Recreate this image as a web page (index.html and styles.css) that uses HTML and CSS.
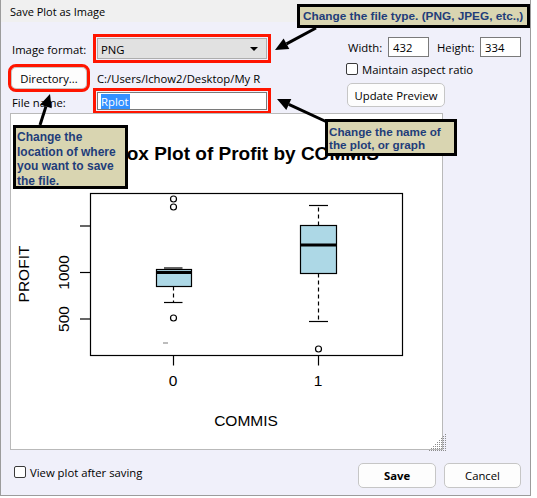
FILE: index.html
```html
<!DOCTYPE html>
<html>
<head>
<meta charset="utf-8">
<title>Save Plot as Image</title>
<link rel="stylesheet" href="styles.css">
</head>
<body>
<div class="window">
  <div class="titlebar">Save Plot as Image</div>
  <div class="content">
    <div class="controls">
      <div class="left">
        <div class="row row-format">
          <span class="label">Image format:</span>
          <div class="select hl"><span>PNG</span><span class="caret"></span></div>
        </div>
        <div class="row row-dir">
          <button class="btn dir hl">Directory...</button>
          <span class="path">C:/Users/lchow2/Desktop/My R</span>
        </div>
        <div class="row row-file">
          <span class="label">File name:</span>
          <div class="input file hl"><span class="sel">Rplot</span></div>
        </div>
      </div>
      <div class="right">
        <div class="size-row">
          <span class="lbl-w">Width:</span>
          <div class="input num">432</div>
          <span class="lbl-h">Height:</span>
          <div class="input num">334</div>
        </div>
        <div class="check-row"><span class="check"></span><span>Maintain aspect ratio</span></div>
        <button class="btn update">Update Preview</button>
      </div>
    </div>
    <div class="canvas">
      <svg class="plot" width="431" height="335" viewBox="11 114 431 335">
        <g font-family="Liberation Sans, Arial, sans-serif" fill="#000">
          <text x="246" y="160" font-size="19" font-weight="bold" text-anchor="middle">Box Plot of Profit by COMMIS</text>
        </g>
        <rect x="90.5" y="193.5" width="312" height="162" fill="none" stroke="#000" stroke-width="1.2"/>
        <g stroke="#000" stroke-width="1.2">
          <line x1="80" y1="226" x2="90.5" y2="226"/>
          <line x1="80" y1="272.5" x2="90.5" y2="272.5"/>
          <line x1="80" y1="319" x2="90.5" y2="319"/>
          <line x1="173.5" y1="355.5" x2="173.5" y2="365.5"/>
          <line x1="318.5" y1="355.5" x2="318.5" y2="365.5"/>
        </g>
        <g font-family="Liberation Sans, Arial, sans-serif" font-size="15.5" fill="#000" text-anchor="middle">
          <text transform="translate(68.5,272.5) rotate(-90)">1000</text>
          <text transform="translate(68.5,319) rotate(-90)">500</text>
          <text transform="translate(28.5,274) rotate(-90)">PROFIT</text>
          <text x="173" y="386">0</text>
          <text x="318" y="386">1</text>
          <text x="246" y="426">COMMIS</text>
        </g>
        <g stroke="#000" stroke-width="1.2" fill="none">
          <line x1="173.5" y1="286.5" x2="173.5" y2="302.5" stroke-dasharray="4 3"/>
          <line x1="164" y1="302.5" x2="182.5" y2="302.5"/>
          <line x1="164" y1="268" x2="182.5" y2="268"/>
          <rect x="156.5" y="269.5" width="35" height="17" fill="#add8e6"/>
          <line x1="156.5" y1="272.5" x2="191.5" y2="272.5" stroke-width="3"/>
          <circle cx="173.5" cy="199" r="3"/>
          <circle cx="173.5" cy="207" r="3"/>
          <circle cx="173.5" cy="318" r="3"/>
        </g>
        <g stroke="#000" stroke-width="1.2" fill="none">
          <line x1="318.5" y1="225.5" x2="318.5" y2="205.5" stroke-dasharray="4 3"/>
          <line x1="318.5" y1="273.5" x2="318.5" y2="321.5" stroke-dasharray="4 3"/>
          <line x1="309" y1="205.5" x2="328" y2="205.5"/>
          <line x1="309" y1="321.5" x2="328" y2="321.5"/>
          <rect x="300.5" y="225.5" width="36" height="48" fill="#add8e6"/>
          <line x1="300.5" y1="245" x2="336.5" y2="245" stroke-width="3"/>
          <circle cx="318.5" cy="349" r="3"/>
        </g>
        <line x1="163" y1="343" x2="168" y2="343" stroke="#bdbdbd" stroke-width="2"/>
      </svg>
      <svg class="grip" width="20" height="20" viewBox="0 0 20 20">
        <defs>
          <pattern id="dots" width="2" height="2" patternUnits="userSpaceOnUse">
            <rect width="1" height="1" fill="#8c8c8c"/>
          </pattern>
        </defs>
        <polygon points="1,19 19,1 19,19" fill="url(#dots)"/>
      </svg>
    </div>
    <div class="footer">
      <div class="check-row"><span class="check"></span><span>View plot after saving</span></div>
      <div class="buttons">
        <button class="btn save">Save</button>
        <button class="btn cancel">Cancel</button>
      </div>
    </div>
  </div>

  <div class="note note-type">Change the file type. (PNG, JPEG, etc.,)</div>
  <div class="note note-dir">Change the<br>location of where<br>you want to save<br>the file.</div>
  <div class="note note-name">Change the name of<br>the plot, or graph</div>

  <svg class="arrows" width="531" height="496" viewBox="0 0 531 496">
    <g stroke="#000" stroke-width="3">
      <line x1="316" y1="28" x2="286.5" y2="43.9"/>
      <line x1="327" y1="122" x2="288.8" y2="104.4"/>
      <line x1="40" y1="125" x2="46" y2="106.4"/>
    </g>
    <g fill="#000">
      <polygon points="275,50 283.6,38.6 289.3,49.1"/>
      <polygon points="277,99 291.3,98.9 286.3,109.9"/>
      <polygon points="50,94 51.7,108.2 40.3,104.6"/>
    </g>
  </svg>
</div>
</body>
</html>
```

FILE: styles.css
```css
* { box-sizing: border-box; }

html, body {
  margin: 0;
  padding: 0;
  background: #ffffff;
}

body {
  font-family: "Open Sans", "Noto Sans", sans-serif;
  font-size: 11.3px;
  color: #000;
}

.window {
  position: relative;
  width: 531px;
  height: 496px;
  background: #f0f0fa;
  border: 1px solid #9c9c9c;
  border-top: none;
  overflow: hidden;
}

.titlebar {
  height: 22px;
  background: #f0f0f0;
  padding-left: 9px;
  line-height: 24px;
  font-size: 11px;
}

.content {
  padding: 0 9px 0 9px;
}

.controls {
  display: flex;
  height: 91px;
}

.left {
  width: 336px;
  padding-top: 16px;
}

.row {
  display: flex;
  align-items: center;
}

.row-format { height: 21px; }
.row-dir { height: 22px; margin-top: 8px; }
.row-file { height: 18px; margin-top: 3px; }

.label {
  width: 87px;
  padding-left: 2px;
  padding-top: 2px;
}

.hl {
  outline: 3px solid #ff1500;
  outline-offset: 1px;
}

.select {
  width: 170px;
  height: 21px;
  background: #e1e1e1;
  border: 1px solid #adadad;
  display: flex;
  align-items: center;
  justify-content: space-between;
  padding: 1px 8px 0 3px;
}

.caret {
  width: 0;
  height: 0;
  border-left: 4px solid transparent;
  border-right: 4px solid transparent;
  border-top: 4px solid #000;
}

.btn {
  font: inherit;
  color: #000;
  background: #fdfdfd;
  border: 1px solid #c6c6c6;
  border-radius: 5px;
  padding: 0;
}

.dir {
  width: 76px;
  height: 22px;
  margin-left: 1px;
  outline-offset: 0;
}

.path {
  margin-left: 10px;
}

.input {
  background: #fff;
  border: 1px solid #7a7a7a;
}

.file {
  width: 170px;
  height: 18px;
  display: flex;
  align-items: center;
  padding-left: 3px;
  padding-top: 1px;
}

.sel {
  background: #3390ff;
  color: #fff;
  line-height: 15px;
  padding-right: 1px;
}

.right {
  width: 175px;
  padding-top: 15px;
  display: flex;
  flex-direction: column;
  align-items: flex-start;
}

.size-row {
  display: flex;
  align-items: center;
  height: 20px;
}

.lbl-w { margin-left: 2px; width: 40px; }
.lbl-h { margin-left: 8px; width: 43px; }

.num {
  width: 41px;
  height: 20px;
  padding-left: 4px;
  line-height: 19px;
}

.check-row {
  display: flex;
  align-items: center;
  height: 12px;
  margin-top: 6px;
}

.check {
  width: 12px;
  height: 12px;
  border: 1px solid #3a3a3a;
  border-radius: 2px;
  background: #fff;
  margin-right: 4px;
}

.update {
  margin-top: 8px;
  margin-left: 1px;
  width: 98px;
  height: 24px;
}

.canvas {
  position: relative;
  width: 433px;
  height: 337px;
  background: #fff;
  border: 1px solid #b9b9b9;
}

.plot { display: block; }

.grip {
  position: absolute;
  right: -5px;
  bottom: -3px;
}

.footer {
  display: flex;
  margin-top: 13px;
  height: 25px;
}

.footer .check-row {
  margin: 3px 0 0 4px;
}

.buttons {
  margin-left: auto;
  display: flex;
  gap: 8px;
}

.save {
  width: 78px;
  height: 25px;
  font-weight: bold;
}

.cancel {
  width: 77px;
  height: 25px;
}

.note {
  position: absolute;
  background: #d9d5b1;
  border: 3px solid #000;
  color: #1f3d7a;
  font-family: "Liberation Sans", Arial, sans-serif;
  font-weight: bold;
  white-space: nowrap;
}

.note-type {
  left: 296px;
  top: 4px;
  width: 233px;
  height: 24px;
  font-size: 11.8px;
  line-height: 18px;
  padding-left: 3px;
}

.note-dir {
  left: 12px;
  top: 125px;
  width: 115px;
  height: 64px;
  font-size: 12px;
  line-height: 14.5px;
  padding: 2px 0 0 1px;
}

.note-name {
  left: 324px;
  top: 119px;
  width: 132px;
  height: 37px;
  font-size: 11.7px;
  line-height: 12.5px;
  padding: 4px 0 0 1px;
}

.arrows {
  position: absolute;
  left: -1px;
  top: 0;
  pointer-events: none;
}
```
